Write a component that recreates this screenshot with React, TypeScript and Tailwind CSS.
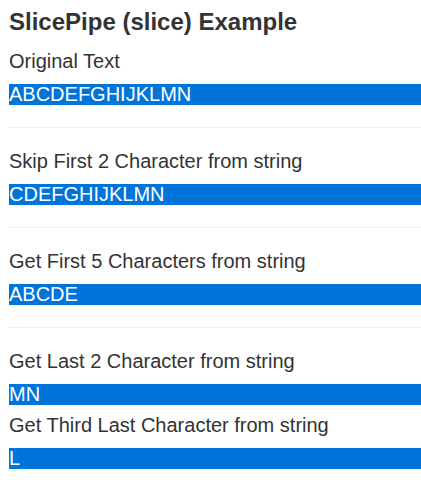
const sections = [
  { label: "Original Text", value: "ABCDEFGHIJKLMN" },
  { label: "Skip First 2 Character from string", value: "CDEFGHIJKLMN" },
  { label: "Get First 5 Characters from string", value: "ABCDE" },
];

function Bar({ value }: { value: string }) {
  return (
    <div className="mt-[11px] h-[21px] bg-[#0074d9] text-[20px] leading-[21px] text-white">
      {value}
    </div>
  );
}

export default function App() {
  return (
    <div className="min-h-[480px] bg-white pl-[9px] pt-[9px] font-['Liberation_Sans',Arial,sans-serif] text-[#333]">
      <h3 className="text-[24px] font-bold leading-[26px]">SlicePipe (slice) Example</h3>

      {sections.map((s, i) => (
        <div key={s.label}>
          <div className={`${i === 0 ? "mt-[15px]" : "mt-[22px]"} text-[20px] leading-[23px]`}>{s.label}</div>
          <Bar value={s.value} />
          <hr className="mt-[22px] border-0 border-t border-[#eeeeee]" />
        </div>
      ))}

      <div className="mt-[22px] text-[20px] leading-[23px]">Get Last 2 Character from string</div>
      <Bar value="MN" />
      <div className="mt-[9px] text-[20px] leading-[23px]">Get Third Last Character from string</div>
      <Bar value="L" />
    </div>
  );
}
